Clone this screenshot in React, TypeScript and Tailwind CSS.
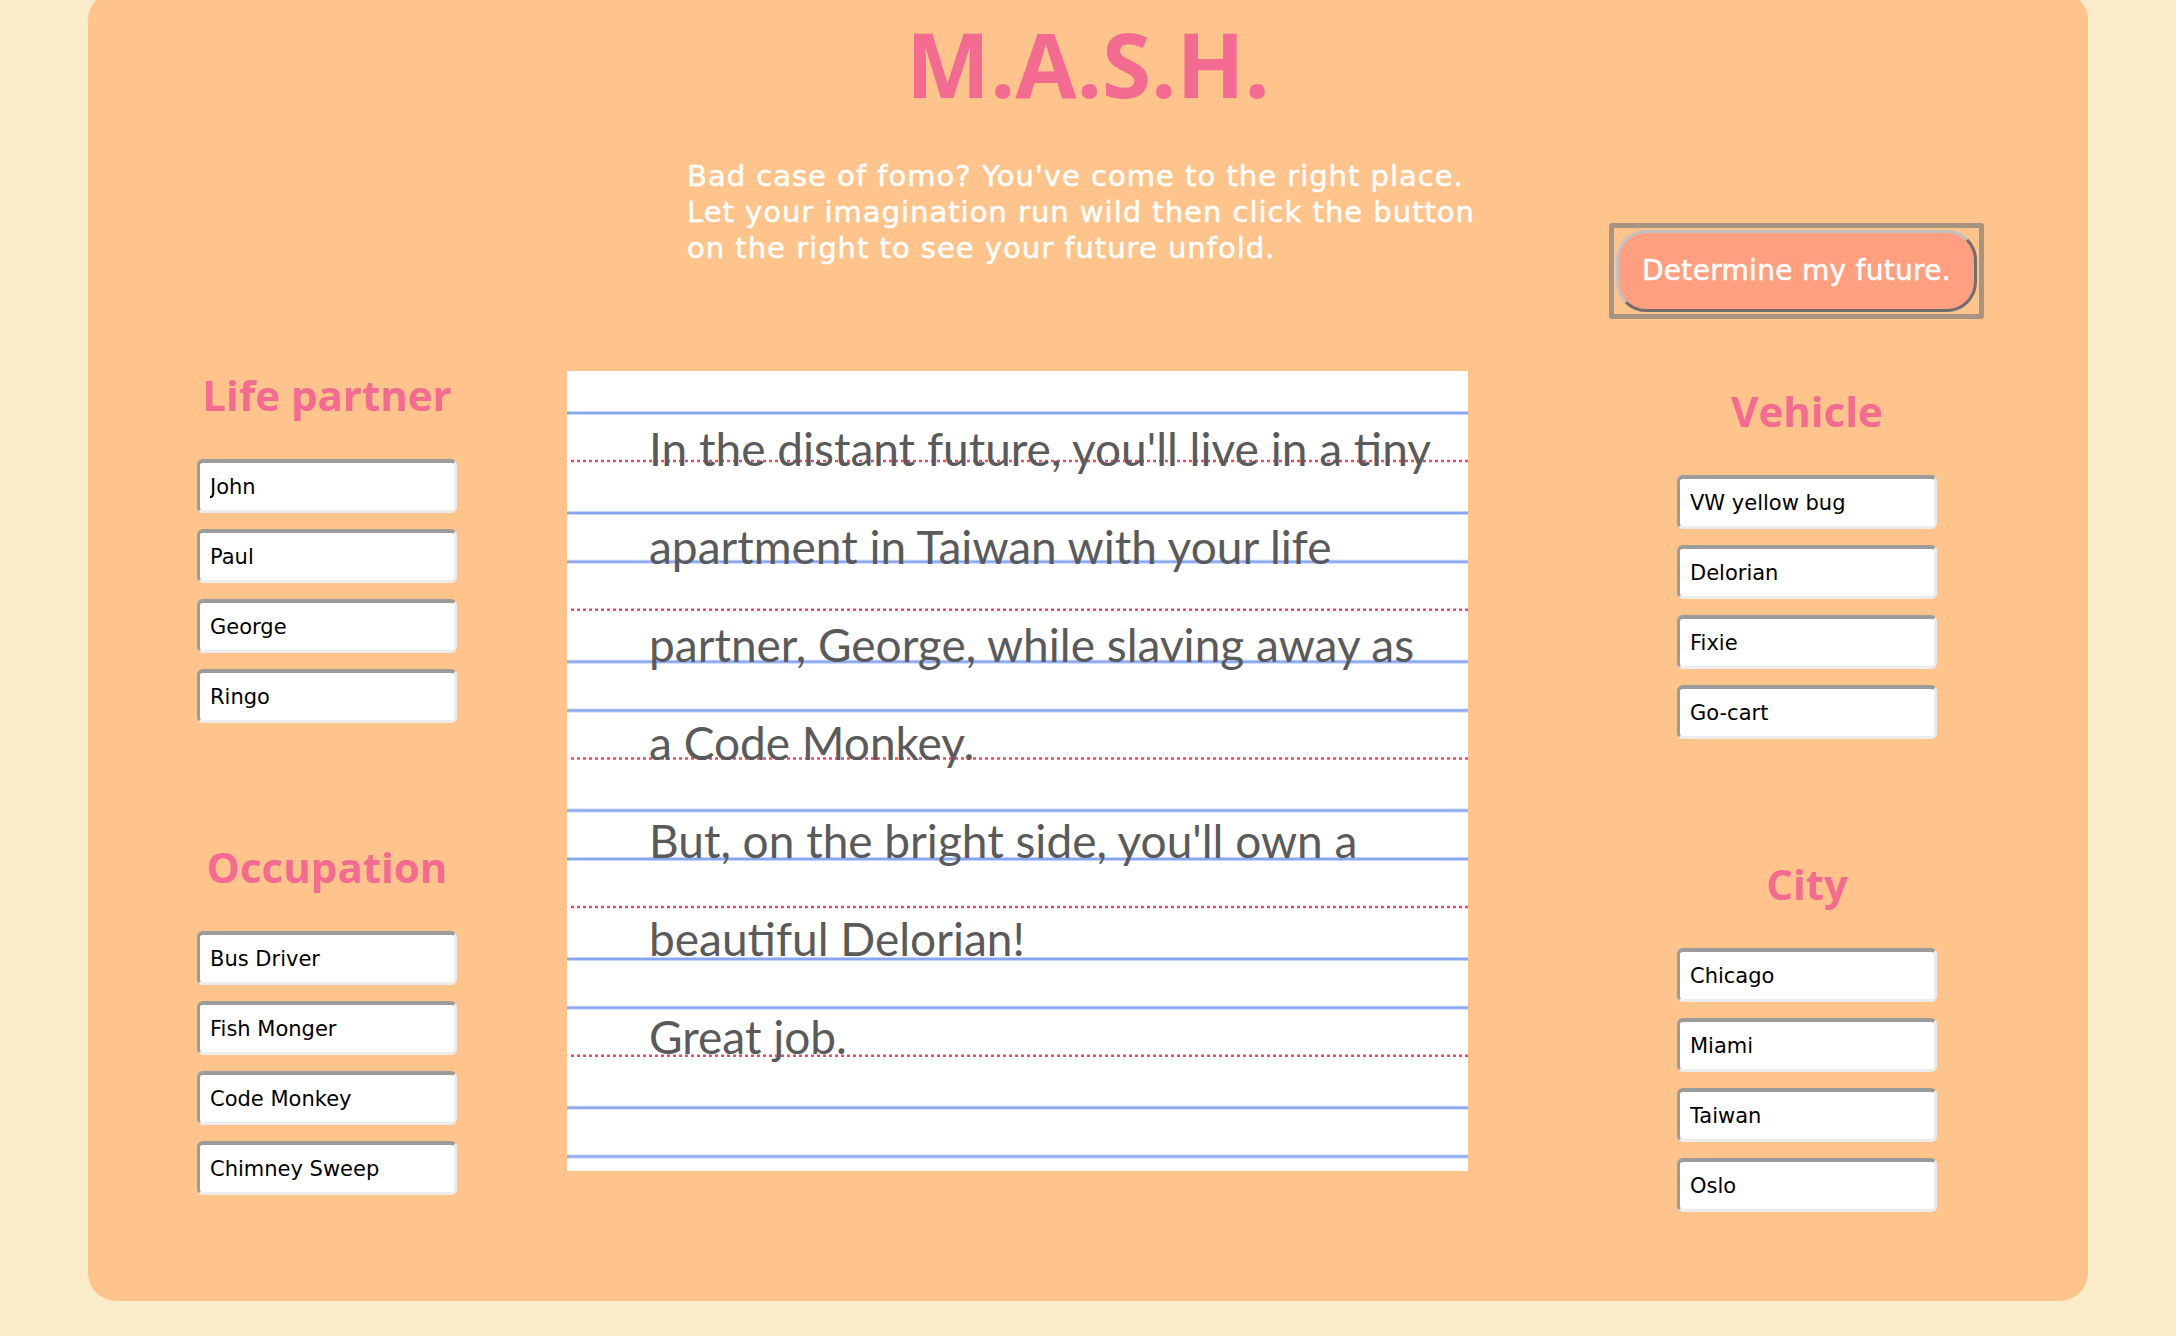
const partners = ['John', 'Paul', 'George', 'Ringo'];
const occupations = ['Bus Driver', 'Fish Monger', 'Code Monkey', 'Chimney Sweep'];
const vehicles = ['VW yellow bug', 'Delorian', 'Fixie', 'Go-cart'];
const cities = ['Chicago', 'Miami', 'Taiwan', 'Oslo'];

const futureLines = [
  "In the distant future, you'll live in a tiny",
  'apartment in Taiwan with your life',
  'partner, George, while slaving away as',
  'a Code Monkey.',
  "But, on the bright side, you'll own a",
  'beautiful Delorian!',
  'Great job.',
];

const PERIOD = 148.7;

function OptionGroup({ title, options, className = '' }: { title: string; options: string[]; className?: string }) {
  return (
    <div className={`flex flex-col ${className}`}>
      <h2 className="text-center font-['Open_Sans',sans-serif] text-[42px] font-bold leading-[48px] text-[#f46b91]">
        {title}
      </h2>
      <div className="mt-[40px] flex flex-col gap-[16px]">
        {options.map((opt) => (
          <input
            key={opt}
            type="text"
            defaultValue={opt}
            className="h-[54px] w-[260px] rounded-[6px] border-[3px] border-t-[4px] border-t-[#9b9b9b] border-l-[#9b9b9b] border-r-[#ececec] border-b-[#ececec] bg-white pl-[10px] font-['DejaVu_Sans',sans-serif] text-[21px] text-black outline-none"
          />
        ))}
      </div>
    </div>
  );
}

function NotebookLines() {
  const rows = [0, 1, 2, 3, 4, 5];
  return (
    <svg className="absolute inset-0 h-full w-full" width="901" height="800">
      {rows.map((k) => (
        <g key={k}>
          <line x1="0" x2="901" y1={42 + k * PERIOD} y2={42 + k * PERIOD} stroke="#c4d3f8" strokeWidth="4" />
          <line x1="0" x2="901" y1={42 + k * PERIOD} y2={42 + k * PERIOD} stroke="#88a6f0" strokeWidth="2" />
          {k < 5 && (
            <>
              <line x1="0" x2="901" y1={142 + k * PERIOD} y2={142 + k * PERIOD} stroke="#c4d3f8" strokeWidth="4" />
              <line x1="0" x2="901" y1={142 + k * PERIOD} y2={142 + k * PERIOD} stroke="#88a6f0" strokeWidth="2" />
              <line
                x1="4"
                x2="901"
                y1={90 + k * PERIOD}
                y2={90 + k * PERIOD}
                stroke="#ee4862"
                strokeWidth="2.5"
                strokeDasharray="3 3"
              />
            </>
          )}
        </g>
      ))}
    </svg>
  );
}

export default function App() {
  return (
    <div className="min-h-screen overflow-hidden bg-[#faebcb]">
      <div className="mx-auto -mt-[8px] w-[2000px] rounded-[28px] bg-[#ffc48b] pb-[89px]">
        {/* Header */}
        <h1 className="pt-[26px] text-center font-['Open_Sans',sans-serif] text-[89px] font-bold leading-[92px] text-[#f46b91]">
          M.A.S.H.
        </h1>

        <div className="flex items-start">
          <p className="ml-[599px] mt-[48px] w-[800px] font-['DejaVu_Sans',sans-serif] text-[29px] leading-[36px] tracking-[1px] text-white [-webkit-text-stroke:0.5px_white]">
            Bad case of fomo? You've come to the right place.
            <br />
            Let your imagination run wild then click the button
            <br />
            on the right to see your future unfold.
          </p>
          <div className="ml-[122px] mt-[113px] rounded-[3px] border-[5px] border-[#a69480] p-[2px]">
            <button className="flex h-[82px] w-[361px] items-center justify-center rounded-[30px] border-[3px] border-t-[#c2c2c2] border-l-[#c2c2c2] border-r-[#6e6e6e] border-b-[#6e6e6e] bg-[#ff9f80] font-['DejaVu_Sans',sans-serif] text-[28px] tracking-[0.3px] text-white [-webkit-text-stroke:0.5px_white]">
              Determine my future.
            </button>
          </div>
        </div>

        {/* Main */}
        <div className="mt-[52px] flex items-start">
          <div className="ml-[109px] flex w-[260px] flex-col">
            <OptionGroup title="Life partner" options={partners} />
            <OptionGroup title="Occupation" options={occupations} className="mt-[120px]" />
          </div>

          <div className="relative ml-[110px] h-[800px] w-[901px] bg-white">
            <NotebookLines />
            <div className="relative pl-[82px] pt-[29px] font-['Lato',sans-serif] text-[46px] leading-[98px] text-[#5a5a5a]">
              {futureLines.map((line) => (
                <div key={line} className="whitespace-nowrap">
                  {line}
                </div>
              ))}
            </div>
          </div>

          <div className="ml-[209px] flex w-[260px] flex-col pt-[16px]">
            <OptionGroup title="Vehicle" options={vehicles} />
            <OptionGroup title="City" options={cities} className="mt-[121px]" />
          </div>
        </div>
      </div>
    </div>
  );
}
